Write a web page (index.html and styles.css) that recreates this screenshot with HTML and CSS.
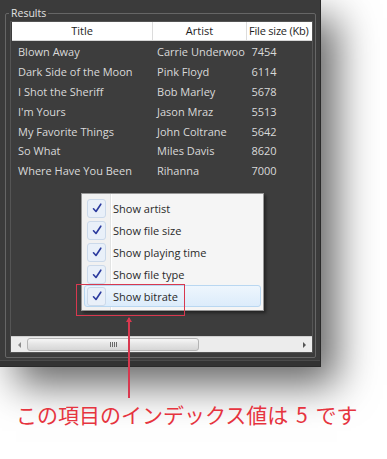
FILE: index.html
```html
<!DOCTYPE html>
<html>
<head>
<meta charset="utf-8">
<link rel="stylesheet" href="styles.css">
</head>
<body>
<div class="stage">
  <div class="window">
    <div class="group">
      <span class="legend">Results</span>
      <div class="list">
        <div class="header">
          <div class="hcell c1">Title</div>
          <div class="hcell c2">Artist</div>
          <div class="hcell c3">File size (Kb)</div>
        </div>
        <div class="rows">
          <div class="row"><span class="c1">Blown Away</span><span class="c2">Carrie Underwood</span><span class="c3">7454</span></div>
          <div class="row"><span class="c1">Dark Side of the Moon</span><span class="c2">Pink Floyd</span><span class="c3">6114</span></div>
          <div class="row"><span class="c1">I Shot the Sheriff</span><span class="c2">Bob Marley</span><span class="c3">5678</span></div>
          <div class="row"><span class="c1">I'm Yours</span><span class="c2">Jason Mraz</span><span class="c3">5513</span></div>
          <div class="row"><span class="c1">My Favorite Things</span><span class="c2">John Coltrane</span><span class="c3">5642</span></div>
          <div class="row"><span class="c1">So What</span><span class="c2">Miles Davis</span><span class="c3">8620</span></div>
          <div class="row"><span class="c1">Where Have You Been</span><span class="c2">Rihanna</span><span class="c3">7000</span></div>
        </div>
        <div class="hscroll">
          <div class="sbtn"><span class="tri-left"></span></div>
          <div class="thumb"><span class="grip"></span></div>
          <div class="track"></div>
          <div class="sbtn"><span class="tri-right"></span></div>
        </div>
      </div>
    </div>
    <div class="status"><span class="resize"></span></div>
  </div>

  <div class="menu">
    <div class="item"><span class="check"><svg viewBox="0 0 12 12" width="12" height="12"><path d="M2.5 6.8 L5 9.5 L9.8 2.2" fill="none" stroke="#2b3a9e" stroke-width="1.6" stroke-linecap="round" stroke-linejoin="round"/></svg></span><span class="label">Show artist</span></div>
    <div class="item"><span class="check"><svg viewBox="0 0 12 12" width="12" height="12"><path d="M2.5 6.8 L5 9.5 L9.8 2.2" fill="none" stroke="#2b3a9e" stroke-width="1.6" stroke-linecap="round" stroke-linejoin="round"/></svg></span><span class="label">Show file size</span></div>
    <div class="item"><span class="check"><svg viewBox="0 0 12 12" width="12" height="12"><path d="M2.5 6.8 L5 9.5 L9.8 2.2" fill="none" stroke="#2b3a9e" stroke-width="1.6" stroke-linecap="round" stroke-linejoin="round"/></svg></span><span class="label">Show playing time</span></div>
    <div class="item"><span class="check"><svg viewBox="0 0 12 12" width="12" height="12"><path d="M2.5 6.8 L5 9.5 L9.8 2.2" fill="none" stroke="#2b3a9e" stroke-width="1.6" stroke-linecap="round" stroke-linejoin="round"/></svg></span><span class="label">Show file type</span></div>
    <div class="item hot"><span class="check"><svg viewBox="0 0 12 12" width="12" height="12"><path d="M2.5 6.8 L5 9.5 L9.8 2.2" fill="none" stroke="#2b3a9e" stroke-width="1.6" stroke-linecap="round" stroke-linejoin="round"/></svg></span><span class="label">Show bitrate</span></div>
  </div>

  <div class="callout-box"></div>
  <div class="callout-line"><span class="arrowhead"></span></div>

  <p class="caption">この項目のインデックス値は 5 です</p>
</div>
</body>
</html>
```

FILE: styles.css
```css
html, body {
  margin: 0;
  padding: 0;
  background: #ffffff;
}

.stage {
  position: relative;
  width: 387px;
  height: 459px;
  overflow: hidden;
  font-family: "Open Sans", "Noto Sans", sans-serif;
}

.window {
  width: 321px;
  height: 367px;
  background: #3b3b3b;
  box-sizing: border-box;
  border-right: 1px solid #2a2a2a;
  border-bottom: 1px solid #2a2a2a;
  box-shadow: 16px 18px 38px rgba(0, 0, 0, 0.6);
  padding: 13px 4px 0 5px;
  display: flex;
  flex-direction: column;
}

.group {
  position: relative;
  height: 345px;
  border: 1px solid #666666;
  border-radius: 2px;
  box-sizing: border-box;
  padding: 7px 2px 4px 4px;
  display: flex;
  flex-direction: column;
}

.legend {
  position: absolute;
  top: -7px;
  left: 3px;
  padding: 0 2px;
  background: #3b3b3b;
  color: #e2e2e2;
  font-size: 10.5px;
  line-height: 13px;
}

.list {
  flex: 1;
  border: 1px solid #555555;
  background: #3d3d3d;
  display: flex;
  flex-direction: column;
  overflow: hidden;
}

.header {
  display: flex;
  height: 19px;
  background: #ffffff;
  border-bottom: 1px solid #d6d6d6;
  box-sizing: border-box;
  margin: 0 0 0 1px;
  width: 302px;
}

.hcell {
  font-size: 11px;
  line-height: 18px;
  color: #1e1e1e;
  text-align: center;
  white-space: nowrap;
  overflow: hidden;
  box-sizing: border-box;
}

.hcell.c1 { width: 141px; border-right: 1px solid #dcdcdc; }
.hcell.c2 { width: 94px; border-right: 1px solid #dcdcdc; }
.hcell.c3 { width: 67px; text-align: left; padding-left: 2px; letter-spacing: -0.2px; }

.rows {
  flex: 1;
  padding-top: 1px;
}

.row {
  display: flex;
  height: 19.8px;
  align-items: center;
  font-size: 11px;
  color: #d9d9d9;
  margin-left: 1px;
}

.row span {
  white-space: nowrap;
  overflow: hidden;
  box-sizing: border-box;
}

.row .c1 { width: 141px; padding-left: 6px; }
.row .c2 { width: 94px; padding-left: 5px; }
.row .c3 { width: 67px; padding-left: 6px; }

.hscroll {
  height: 16px;
  display: flex;
  background: #ececec;
  border-top: 1px solid #d0d0d0;
  box-sizing: border-box;
}

.sbtn {
  width: 16px;
  display: flex;
  align-items: center;
  justify-content: center;
}

.tri-left {
  width: 0;
  height: 0;
  border-top: 3px solid transparent;
  border-bottom: 3px solid transparent;
  border-right: 3px solid #8a8a8a;
}

.tri-right {
  width: 0;
  height: 0;
  border-top: 3.5px solid transparent;
  border-bottom: 3.5px solid transparent;
  border-left: 3.5px solid #555555;
}

.thumb {
  width: 172px;
  margin: 1px 0;
  border: 1px solid #b4b4b4;
  border-radius: 3px;
  background: linear-gradient(#f6f6f6, #e4e4e4 50%, #d6d6d6);
  box-sizing: border-box;
  display: flex;
  align-items: center;
  justify-content: center;
}

.grip {
  width: 7px;
  height: 5px;
  background: repeating-linear-gradient(90deg, #6a6a6a 0 1px, transparent 1px 2px);
}

.track { flex: 1; }

.status {
  flex: 1;
  position: relative;
  border-top: 1px solid #4a4a4a;
  margin-top: 2px;
  background: #333333;
  margin-left: -5px;
  margin-right: -4px;
}

.resize {
  position: absolute;
  right: 1px;
  bottom: 1px;
  width: 5px;
  height: 5px;
  background: radial-gradient(circle, #1e1e1e 45%, transparent 50%) 0 0 / 2px 2px;
}

.menu {
  position: absolute;
  left: 81px;
  top: 193px;
  width: 183px;
  height: 118px;
  box-sizing: border-box;
  background: linear-gradient(90deg, #f1f1f1 0 28px, #e2e3e3 28px 29px, #ffffff 29px 30px, #f5f5f5 30px);
  border: 1px solid #979797;
  box-shadow: 2px 2px 3px rgba(0, 0, 0, 0.45);
  padding: 3px 2px;
  display: flex;
  flex-direction: column;
}

.item {
  height: 22.5px;
  display: flex;
  align-items: center;
  box-sizing: border-box;
  border: 1px solid transparent;
  border-radius: 3px;
}

.item.hot {
  background: linear-gradient(#eef6fd, #dcecfb);
  border-color: #b9d7f1;
}

.check {
  width: 19px;
  height: 19px;
  margin-left: 2px;
  box-sizing: border-box;
  border: 1px solid #cbd9ea;
  border-radius: 3px;
  background: #e9f0f9;
  display: flex;
  align-items: center;
  justify-content: center;
}

.label {
  margin-left: 7px;
  font-size: 11px;
  color: #2a2a2a;
  white-space: nowrap;
}

.callout-box {
  position: absolute;
  left: 76px;
  top: 284px;
  width: 109px;
  height: 32px;
  box-sizing: border-box;
  border: 1.5px solid #d8384f;
}

.callout-line {
  position: absolute;
  left: 128px;
  top: 318px;
  width: 1.5px;
  height: 80px;
  background: #d8384f;
}

.arrowhead {
  position: absolute;
  left: -2.5px;
  top: -1px;
  width: 0;
  height: 0;
  border-left: 3.25px solid transparent;
  border-right: 3.25px solid transparent;
  border-bottom: 5px solid #d8384f;
}

.caption {
  margin: 35px 0 0 16px;
  font-family: "Noto Sans CJK JP", "Noto Sans", sans-serif;
  font-size: 21px;
  line-height: 24px;
  color: #e6343f;
  white-space: nowrap;
  word-spacing: 3px;
}
```
